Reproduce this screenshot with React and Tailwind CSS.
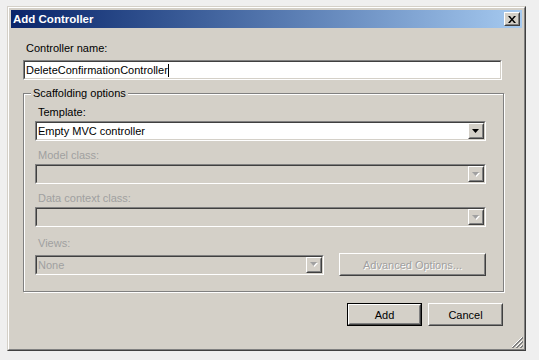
import React from "react";

function Raised({ className = "", innerClassName = "", children }) {
  return (
    <div className={`border border-t-white border-l-white border-r-[#404040] border-b-[#404040] ${className}`}>
      <div className={`h-full w-full border border-t-[#d4d0c8] border-l-[#d4d0c8] border-r-[#808080] border-b-[#808080] bg-[#d4d0c8] ${innerClassName}`}>
        {children}
      </div>
    </div>
  );
}

function Sunken({ className = "", innerClassName = "", children }) {
  return (
    <div className={`border border-t-[#808080] border-l-[#808080] border-r-white border-b-white ${className}`}>
      <div className={`h-full w-full border border-t-[#404040] border-l-[#404040] border-r-[#d4d0c8] border-b-[#d4d0c8] ${innerClassName}`}>
        {children}
      </div>
    </div>
  );
}

function Arrow({ disabled }) {
  return (
    <svg width="8" height="5" viewBox="0 0 8 5" className="overflow-visible">
      {disabled && <path d="M1 1 H8 L4.5 5 Z" fill="#ffffff" />}
      <path d="M0 0 H7 L3.5 4 Z" fill={disabled ? "#a0a0a0" : "#000000"} />
    </svg>
  );
}

function Combo({ value, disabled, className = "" }) {
  return (
    <Sunken
      className={`h-[20px] ${className}`}
      innerClassName={`flex ${disabled ? "bg-[#d4d0c8]" : "bg-white"}`}
    >
      <div
        className={`flex-1 flex items-center pl-[1px] leading-[14px] ${
          disabled ? "text-[#a0a0a0]" : "text-black"
        }`}
      >
        {value}
      </div>
      <Raised className="w-[16px] h-full" innerClassName="flex items-center justify-center">
        <Arrow disabled={disabled} />
      </Raised>
    </Sunken>
  );
}

function Label({ children, disabled, className = "" }) {
  return (
    <div
      className={`pl-[3px] leading-[14px] ${disabled ? "text-[#a0a0a0]" : "text-black"} ${className}`}
    >
      {children}
    </div>
  );
}

export default function App() {
  return (
    <div className="w-[539px] h-[360px] bg-[#efefef] pt-[6px] pl-[7px] font-['Liberation_Sans',Arial,sans-serif] text-[11px] overflow-hidden">
      <div className="relative w-[519px] h-[345px] border border-t-[#d4d0c8] border-l-[#d4d0c8] border-r-[#404040] border-b-[#404040]">
        <div className="h-full w-full border border-t-white border-l-white border-r-[#808080] border-b-[#808080] bg-[#d4d0c8] p-[2px]">
          {/* Title bar */}
          <div className="h-[18px] flex items-center justify-between bg-linear-to-r from-[#0a246a] to-[#a6caf0] pl-[2px] pr-[2px]">
            <span className="text-white font-bold text-[11.5px] leading-[14px]">Add Controller</span>
            <Raised className="w-[16px] h-[14px]" innerClassName="flex items-center justify-center">
              <svg width="8" height="7" viewBox="0 0 8 7">
                <path
                  d="M0 0 H2 L4 2.5 L6 0 H8 L5 3.5 L8 7 H6 L4 4.5 L2 7 H0 L3 3.5 Z"
                  fill="#000"
                />
              </svg>
            </Raised>
          </div>

          {/* Content */}
          <div className="pl-[12px] pt-[13px] w-[491px]">
            <Label>Controller name:</Label>
            <Sunken className="mt-[5px] h-[20px] w-[479px]" innerClassName="bg-white flex items-center pl-[1px]">
              <span className="leading-[14px] text-black">DeleteConfirmationController</span>
              <span className="w-px h-[13px] bg-black" />
            </Sunken>

            <fieldset className="mt-[6px] w-[479px] border border-[#808080] shadow-[inset_1px_1px_0_#ffffff,1px_1px_0_#ffffff] pb-[15px]">
              <legend className="ml-[7px] px-[2px] leading-[14px] bg-[#d4d0c8] text-black">
                Scaffolding options
              </legend>
              <div className="pl-[11px] pr-[17px] pt-[5px]">
                <Label>Template:</Label>
                <Combo className="mt-[2px]" value="Empty MVC controller" />

                <Label disabled className="mt-[7px]">Model class:</Label>
                <Combo className="mt-[2px]" disabled value="" />

                <Label disabled className="mt-[7px]">Data context class:</Label>
                <Combo className="mt-[2px]" disabled value="" />

                <Label disabled className="mt-[9px]">Views:</Label>
                <div className="mt-[3px] h-[23px] flex items-center">
                  <Combo className="w-[289px]" disabled value="None" />
                  <Raised
                    className="ml-[15px] w-[147px] h-[23px]"
                    innerClassName="flex items-center justify-center"
                  >
                    <span className="text-[#a0a0a0] leading-[14px] [text-shadow:1px_1px_0_#ffffff]">
                      Advanced Options...
                    </span>
                  </Raised>
                </div>
              </div>
            </fieldset>

            <div className="mt-[11px] flex justify-end gap-[6px] w-[480px]">
              <div className="border border-black">
                <Raised className="w-[73px] h-[21px]" innerClassName="flex items-center justify-center">
                  <span className="leading-[14px] text-black">Add</span>
                </Raised>
              </div>
              <Raised className="w-[75px] h-[23px]" innerClassName="flex items-center justify-center">
                <span className="leading-[14px] text-black">Cancel</span>
              </Raised>
            </div>
          </div>
        </div>

        {/* Resize grip */}
        <svg
          className="absolute right-[2px] bottom-[2px]"
          width="12"
          height="12"
          viewBox="0 0 12 12"
        >
          <path d="M11 1 L1 11 M11 5 L5 11 M11 9 L9 11" stroke="#ffffff" strokeWidth="1" />
          <path d="M12 1 L1 12 M12 2 L2 12 M12 5 L5 12 M12 6 L6 12 M12 9 L9 12 M12 10 L10 12" stroke="#808080" strokeWidth="1" />
        </svg>
      </div>
    </div>
  );
}
